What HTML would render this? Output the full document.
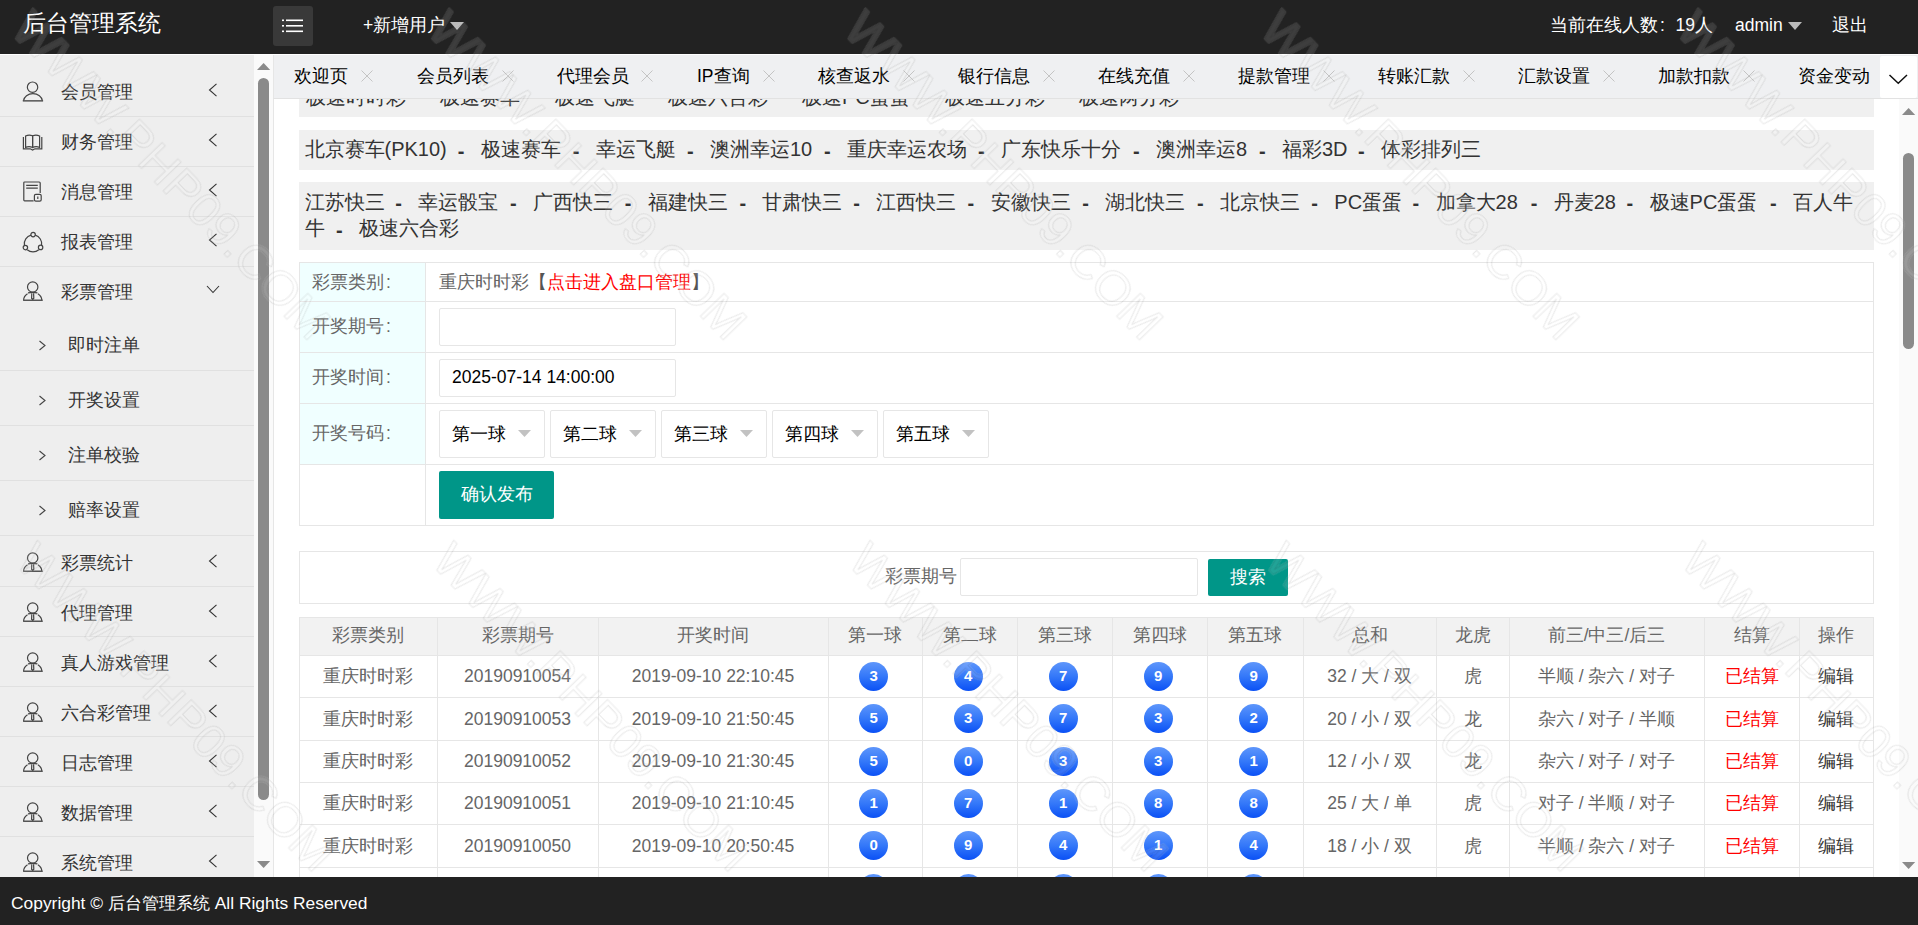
<!DOCTYPE html><html><head><meta charset="utf-8"><style>
*{margin:0;padding:0;box-sizing:border-box}
html,body{width:1918px;height:925px;overflow:hidden;background:#fff;font-family:"Liberation Sans",sans-serif;color:#333}
.a{position:absolute;white-space:nowrap}
#hd{position:absolute;left:0;top:0;width:1918px;height:54px;background:#222}
.logo{left:23px;top:7px;font-size:22.5px;line-height:34px;color:#fff}
.ham{left:273px;top:6px;width:40px;height:40px;background:#393939;border-radius:3px}
.hw{color:#fff;font-size:17.5px;line-height:28px;top:11px}
.tri{display:inline-block;width:0;height:0;border-left:7px solid transparent;border-right:7px solid transparent;border-top:8px solid #bbb;vertical-align:middle}
#side{position:absolute;left:0;top:55px;width:254px;height:822px;background:#eee;overflow:hidden}
.sep{position:absolute;left:0;width:254px;height:1px;background:#e0e0e0}
.st{font-size:17.5px;line-height:26px;color:#333}
#sscroll{position:absolute;left:254px;top:55px;width:19px;height:822px;background:#fafafa}
#tabs{position:absolute;left:273px;top:55px;width:1645px;height:44px;background:#eff0f2;border-left:1px solid #e6e6e6;border-bottom:1px solid #e2e2e2}
.tb{top:9px;font-size:17.5px;line-height:24px;color:#000}
.dd{display:inline-block;width:35px;padding-left:11.5px}
.ball{position:absolute;width:29px;height:29px;border-radius:50%;background:linear-gradient(#5e96fb,#3478f9 50%,#0a50f5);color:#fff;font-weight:bold;font-size:15px;line-height:27px;text-align:center}
.cl{display:inline-block;padding-left:2px}
.cl2{display:inline-block;width:17.5px;padding-left:2px}
#ft{position:absolute;left:0;top:877px;width:1918px;height:48px;background:#222}
</style></head><body>
<div id="hd">
<div class="a logo">后台管理系统</div>
<div class="a ham"><svg width="40" height="40" style="position:absolute;left:0;top:0"><g fill="#fff"><rect x="9" y="13.5" width="2" height="1.6"/><rect x="13" y="13.5" width="17" height="1.6"/><rect x="9" y="19" width="2" height="1.6"/><rect x="13" y="19" width="17" height="1.6"/><rect x="9" y="24.5" width="2" height="1.6"/><rect x="13" y="24.5" width="17" height="1.6"/></g></svg></div>
<div class="a hw" style="left:363px">+新增用户 <span class="tri"></span></div>
<div class="a hw" style="left:1550px">当前在线人数<span class="cl2">:</span>19人</div>
<div class="a hw" style="left:1735px">admin <span class="tri"></span></div>
<div class="a hw" style="left:1832px">退出</div>
</div>
<div class="a" style="left:0;top:54px;width:1918px;height:1px;background:#fff"></div>
<div id="side"></div>
<div class="a" style="left:0;top:0;width:254px;height:877px;overflow:hidden"><svg class="a" style="left:22px;top:81px" width="22" height="22" viewBox="0 0 22 22"><g fill="none" stroke="#444" stroke-width="1.2"><circle cx="10.55" cy="6.2" r="5.2"/><path d="M1.4 20 A9.6 8.2 0 0 1 20.5 20"/></g><rect x="0.8" y="19.1" width="20.3" height="1.5" fill="#555"/></svg><div class="a st" style="left:61px;top:79px">会员管理</div><svg class="a" style="left:208px;top:83px" width="10" height="14" viewBox="0 0 10 14"><path d="M8.5 0.8 L1.5 7 L8.5 13.2" fill="none" stroke="#333" stroke-width="1.1"/></svg><svg class="a" style="left:22px;top:131px" width="22" height="22" viewBox="0 0 22 22"><g fill="none" stroke="#444" stroke-width="1.2"><path d="M3.6 5 Q7 3.4 10.6 4.8 L10.6 16.4 Q7 15 3.6 16.4 Z"/><path d="M17.6 5 Q14.2 3.4 10.6 4.8 L10.6 16.4 Q14.2 15 17.6 16.4 Z"/><path d="M1.4 6 L1.4 17.8 L8.2 17.8 L10.6 19 L13 17.8 L19.8 17.8 L19.8 6"/></g></svg><div class="a st" style="left:61px;top:129px">财务管理</div><svg class="a" style="left:208px;top:133px" width="10" height="14" viewBox="0 0 10 14"><path d="M8.5 0.8 L1.5 7 L8.5 13.2" fill="none" stroke="#333" stroke-width="1.1"/></svg><svg class="a" style="left:22px;top:181px" width="22" height="22" viewBox="0 0 22 22"><g fill="none" stroke="#444" stroke-width="1.2"><path d="M11.6 19.8 L2.6 19.8 Q1.8 19.8 1.8 19 L1.8 1.8 Q1.8 1 2.6 1 L17.2 1 Q18.2 1 18.2 2 L18.2 12"/><path d="M4.2 4.4 L15.8 4.4 M4.2 7.2 L15.8 7.2" stroke-width="1.3"/><rect x="12.4" y="13.4" width="6.8" height="6.8" rx="1.4"/><path d="M15.8 15.4 L15.8 18"/></g></svg><div class="a st" style="left:61px;top:179px">消息管理</div><svg class="a" style="left:208px;top:183px" width="10" height="14" viewBox="0 0 10 14"><path d="M8.5 0.8 L1.5 7 L8.5 13.2" fill="none" stroke="#333" stroke-width="1.1"/></svg><svg class="a" style="left:22px;top:231px" width="22" height="22" viewBox="0 0 22 22"><g fill="none" stroke="#444" stroke-width="1.2"><path d="M9 4.2 A9 9 0 0 0 2.4 14.2"/><path d="M13.2 4.2 A9 9 0 0 1 19.6 14.2"/><path d="M5.2 18.8 A9 9 0 0 0 16.8 18.8"/><circle cx="11.1" cy="3.6" r="2.2"/><circle cx="3.4" cy="16.6" r="2.2"/><circle cx="18.6" cy="16.4" r="2.2"/></g></svg><div class="a st" style="left:61px;top:229px">报表管理</div><svg class="a" style="left:208px;top:233px" width="10" height="14" viewBox="0 0 10 14"><path d="M8.5 0.8 L1.5 7 L8.5 13.2" fill="none" stroke="#333" stroke-width="1.1"/></svg><svg class="a" style="left:22px;top:281px" width="22" height="22" viewBox="0 0 22 22"><g fill="none" stroke="#444" stroke-width="1.2"><circle cx="10.7" cy="6" r="5.2"/><path d="M5.5 12.8 A9.6 8.2 0 0 0 1.6 19.4 M15.9 12.8 A9.6 8.2 0 0 1 19.8 19.4 M6 11.9 Q10.7 10.8 15.4 11.9"/><path d="M9.8 12.2 L9.6 17.2 L10.7 18.6 L11.8 17.2 L11.6 12.2"/></g><rect x="1.2" y="18.5" width="19.5" height="1.5" fill="#555"/></svg><div class="a st" style="left:61px;top:279px">彩票管理</div><svg class="a" style="left:206px;top:285px" width="14" height="9" viewBox="0 0 14 9"><path d="M1 1 L7 7.5 L13 1" fill="none" stroke="#333" stroke-width="1.1"/></svg><svg class="a" style="left:38px;top:340px" width="9" height="11" viewBox="0 0 9 11"><path d="M1.5 1 L7 5.5 L1.5 10" fill="none" stroke="#444" stroke-width="1.1"/></svg><div class="a st" style="left:68px;top:332px">即时注单</div><svg class="a" style="left:38px;top:395px" width="9" height="11" viewBox="0 0 9 11"><path d="M1.5 1 L7 5.5 L1.5 10" fill="none" stroke="#444" stroke-width="1.1"/></svg><div class="a st" style="left:68px;top:387px">开奖设置</div><svg class="a" style="left:38px;top:450px" width="9" height="11" viewBox="0 0 9 11"><path d="M1.5 1 L7 5.5 L1.5 10" fill="none" stroke="#444" stroke-width="1.1"/></svg><div class="a st" style="left:68px;top:442px">注单校验</div><svg class="a" style="left:38px;top:505px" width="9" height="11" viewBox="0 0 9 11"><path d="M1.5 1 L7 5.5 L1.5 10" fill="none" stroke="#444" stroke-width="1.1"/></svg><div class="a st" style="left:68px;top:497px">赔率设置</div><svg class="a" style="left:22px;top:552px" width="22" height="22" viewBox="0 0 22 22"><g fill="none" stroke="#444" stroke-width="1.2"><circle cx="10.7" cy="6" r="5.2"/><path d="M5.5 12.8 A9.6 8.2 0 0 0 1.6 19.4 M15.9 12.8 A9.6 8.2 0 0 1 19.8 19.4 M6 11.9 Q10.7 10.8 15.4 11.9"/><path d="M9.8 12.2 L9.6 17.2 L10.7 18.6 L11.8 17.2 L11.6 12.2"/></g><rect x="1.2" y="18.5" width="19.5" height="1.5" fill="#555"/></svg><div class="a st" style="left:61px;top:550px">彩票统计</div><svg class="a" style="left:208px;top:554px" width="10" height="14" viewBox="0 0 10 14"><path d="M8.5 0.8 L1.5 7 L8.5 13.2" fill="none" stroke="#333" stroke-width="1.1"/></svg><svg class="a" style="left:22px;top:602px" width="22" height="22" viewBox="0 0 22 22"><g fill="none" stroke="#444" stroke-width="1.2"><circle cx="10.7" cy="6" r="5.2"/><path d="M5.5 12.8 A9.6 8.2 0 0 0 1.6 19.4 M15.9 12.8 A9.6 8.2 0 0 1 19.8 19.4 M6 11.9 Q10.7 10.8 15.4 11.9"/><path d="M9.8 12.2 L9.6 17.2 L10.7 18.6 L11.8 17.2 L11.6 12.2"/></g><rect x="1.2" y="18.5" width="19.5" height="1.5" fill="#555"/></svg><div class="a st" style="left:61px;top:600px">代理管理</div><svg class="a" style="left:208px;top:604px" width="10" height="14" viewBox="0 0 10 14"><path d="M8.5 0.8 L1.5 7 L8.5 13.2" fill="none" stroke="#333" stroke-width="1.1"/></svg><svg class="a" style="left:22px;top:652px" width="22" height="22" viewBox="0 0 22 22"><g fill="none" stroke="#444" stroke-width="1.2"><circle cx="10.7" cy="6" r="5.2"/><path d="M5.5 12.8 A9.6 8.2 0 0 0 1.6 19.4 M15.9 12.8 A9.6 8.2 0 0 1 19.8 19.4 M6 11.9 Q10.7 10.8 15.4 11.9"/><path d="M9.8 12.2 L9.6 17.2 L10.7 18.6 L11.8 17.2 L11.6 12.2"/></g><rect x="1.2" y="18.5" width="19.5" height="1.5" fill="#555"/></svg><div class="a st" style="left:61px;top:650px">真人游戏管理</div><svg class="a" style="left:208px;top:654px" width="10" height="14" viewBox="0 0 10 14"><path d="M8.5 0.8 L1.5 7 L8.5 13.2" fill="none" stroke="#333" stroke-width="1.1"/></svg><svg class="a" style="left:22px;top:702px" width="22" height="22" viewBox="0 0 22 22"><g fill="none" stroke="#444" stroke-width="1.2"><circle cx="10.7" cy="6" r="5.2"/><path d="M5.5 12.8 A9.6 8.2 0 0 0 1.6 19.4 M15.9 12.8 A9.6 8.2 0 0 1 19.8 19.4 M6 11.9 Q10.7 10.8 15.4 11.9"/><path d="M9.8 12.2 L9.6 17.2 L10.7 18.6 L11.8 17.2 L11.6 12.2"/></g><rect x="1.2" y="18.5" width="19.5" height="1.5" fill="#555"/></svg><div class="a st" style="left:61px;top:700px">六合彩管理</div><svg class="a" style="left:208px;top:704px" width="10" height="14" viewBox="0 0 10 14"><path d="M8.5 0.8 L1.5 7 L8.5 13.2" fill="none" stroke="#333" stroke-width="1.1"/></svg><svg class="a" style="left:22px;top:752px" width="22" height="22" viewBox="0 0 22 22"><g fill="none" stroke="#444" stroke-width="1.2"><circle cx="10.7" cy="6" r="5.2"/><path d="M5.5 12.8 A9.6 8.2 0 0 0 1.6 19.4 M15.9 12.8 A9.6 8.2 0 0 1 19.8 19.4 M6 11.9 Q10.7 10.8 15.4 11.9"/><path d="M9.8 12.2 L9.6 17.2 L10.7 18.6 L11.8 17.2 L11.6 12.2"/></g><rect x="1.2" y="18.5" width="19.5" height="1.5" fill="#555"/></svg><div class="a st" style="left:61px;top:750px">日志管理</div><svg class="a" style="left:208px;top:754px" width="10" height="14" viewBox="0 0 10 14"><path d="M8.5 0.8 L1.5 7 L8.5 13.2" fill="none" stroke="#333" stroke-width="1.1"/></svg><svg class="a" style="left:22px;top:802px" width="22" height="22" viewBox="0 0 22 22"><g fill="none" stroke="#444" stroke-width="1.2"><circle cx="10.7" cy="6" r="5.2"/><path d="M5.5 12.8 A9.6 8.2 0 0 0 1.6 19.4 M15.9 12.8 A9.6 8.2 0 0 1 19.8 19.4 M6 11.9 Q10.7 10.8 15.4 11.9"/><path d="M9.8 12.2 L9.6 17.2 L10.7 18.6 L11.8 17.2 L11.6 12.2"/></g><rect x="1.2" y="18.5" width="19.5" height="1.5" fill="#555"/></svg><div class="a st" style="left:61px;top:800px">数据管理</div><svg class="a" style="left:208px;top:804px" width="10" height="14" viewBox="0 0 10 14"><path d="M8.5 0.8 L1.5 7 L8.5 13.2" fill="none" stroke="#333" stroke-width="1.1"/></svg><svg class="a" style="left:22px;top:852px" width="22" height="22" viewBox="0 0 22 22"><g fill="none" stroke="#444" stroke-width="1.2"><circle cx="10.7" cy="6" r="5.2"/><path d="M5.5 12.8 A9.6 8.2 0 0 0 1.6 19.4 M15.9 12.8 A9.6 8.2 0 0 1 19.8 19.4 M6 11.9 Q10.7 10.8 15.4 11.9"/><path d="M9.8 12.2 L9.6 17.2 L10.7 18.6 L11.8 17.2 L11.6 12.2"/></g><rect x="1.2" y="18.5" width="19.5" height="1.5" fill="#555"/></svg><div class="a st" style="left:61px;top:850px">系统管理</div><svg class="a" style="left:208px;top:854px" width="10" height="14" viewBox="0 0 10 14"><path d="M8.5 0.8 L1.5 7 L8.5 13.2" fill="none" stroke="#333" stroke-width="1.1"/></svg><div class="sep" style="top:116px"></div><div class="sep" style="top:166px"></div><div class="sep" style="top:216px"></div><div class="sep" style="top:266px"></div><div class="sep" style="top:370px"></div><div class="sep" style="top:425px"></div><div class="sep" style="top:480px"></div><div class="sep" style="top:535px"></div><div class="sep" style="top:586px"></div><div class="sep" style="top:636px"></div><div class="sep" style="top:686px"></div><div class="sep" style="top:736px"></div><div class="sep" style="top:786px"></div><div class="sep" style="top:836px"></div></div>
<div id="sscroll"><svg class="a" style="left:3px;top:8px" width="14" height="8"><path d="M0 7 L6.6 0 L13.2 7 Z" fill="#8a8a8a"/></svg><div class="a" style="left:4px;top:23px;width:11px;height:722px;border-radius:6px;background:#8a8a8a"></div><svg class="a" style="left:3px;top:806px" width="14" height="8"><path d="M0 0 L6.6 7 L13.2 0 Z" fill="#8a8a8a"/></svg></div>
<div class="a" style="left:273px;top:55px;width:1645px;height:822px;overflow:hidden;background:#fff"><div class="a" style="left:26px;top:22px;width:1575px;height:40px;background:#f0f0f0"></div><div class="a" style="left:26px;top:75px;width:1575px;height:40px;background:#f0f0f0"></div><div class="a" style="left:26px;top:127px;width:1575px;height:68px;background:#f0f0f0"></div><div class="a" style="left:33px;top:29px;font-size:20px;line-height:26px;color:#333">极速时时彩</div><div class="a" style="left:167px;top:29px;font-size:20px;line-height:26px;color:#333">极速赛车</div><div class="a" style="left:282px;top:29px;font-size:20px;line-height:26px;color:#333">极速飞艇</div><div class="a" style="left:395px;top:29px;font-size:20px;line-height:26px;color:#333">极速六合彩</div><div class="a" style="left:529px;top:29px;font-size:20px;line-height:26px;color:#333">极速PC蛋蛋</div><div class="a" style="left:672px;top:29px;font-size:20px;line-height:26px;color:#333">极速五分彩</div><div class="a" style="left:806px;top:29px;font-size:20px;line-height:26px;color:#333">极速两分彩</div><div class="a" style="left:31.5px;top:81px;font-size:20px;line-height:26px;color:#333">北京赛车(PK10)</div><div class="a" style="left:184.7px;top:82.5px;font-size:20px;line-height:26px;color:#333;font-weight:bold">-</div><div class="a" style="left:207.7px;top:81px;font-size:20px;line-height:26px;color:#333">极速赛车</div><div class="a" style="left:299.70000000000005px;top:82.5px;font-size:20px;line-height:26px;color:#333;font-weight:bold">-</div><div class="a" style="left:322.70000000000005px;top:81px;font-size:20px;line-height:26px;color:#333">幸运飞艇</div><div class="a" style="left:414px;top:82.5px;font-size:20px;line-height:26px;color:#333;font-weight:bold">-</div><div class="a" style="left:437px;top:81px;font-size:20px;line-height:26px;color:#333">澳洲幸运10</div><div class="a" style="left:551px;top:82.5px;font-size:20px;line-height:26px;color:#333;font-weight:bold">-</div><div class="a" style="left:574px;top:81px;font-size:20px;line-height:26px;color:#333">重庆幸运农场</div><div class="a" style="left:705px;top:82.5px;font-size:20px;line-height:26px;color:#333;font-weight:bold">-</div><div class="a" style="left:728px;top:81px;font-size:20px;line-height:26px;color:#333">广东快乐十分</div><div class="a" style="left:860px;top:82.5px;font-size:20px;line-height:26px;color:#333;font-weight:bold">-</div><div class="a" style="left:883px;top:81px;font-size:20px;line-height:26px;color:#333">澳洲幸运8</div><div class="a" style="left:986px;top:82.5px;font-size:20px;line-height:26px;color:#333;font-weight:bold">-</div><div class="a" style="left:1009px;top:81px;font-size:20px;line-height:26px;color:#333">福彩3D</div><div class="a" style="left:1085px;top:82.5px;font-size:20px;line-height:26px;color:#333;font-weight:bold">-</div><div class="a" style="left:1108px;top:81px;font-size:20px;line-height:26px;color:#333">体彩排列三</div><div class="a" style="left:31.80000000000001px;top:133.5px;font-size:20px;line-height:26px;color:#333">江苏快三</div><div class="a" style="left:122.30000000000001px;top:135.0px;font-size:20px;line-height:26px;color:#333;font-weight:bold">-</div><div class="a" style="left:145.3px;top:133.5px;font-size:20px;line-height:26px;color:#333">幸运骰宝</div><div class="a" style="left:237px;top:135.0px;font-size:20px;line-height:26px;color:#333;font-weight:bold">-</div><div class="a" style="left:260px;top:133.5px;font-size:20px;line-height:26px;color:#333">广西快三</div><div class="a" style="left:351.70000000000005px;top:135.0px;font-size:20px;line-height:26px;color:#333;font-weight:bold">-</div><div class="a" style="left:374.70000000000005px;top:133.5px;font-size:20px;line-height:26px;color:#333">福建快三</div><div class="a" style="left:466.4px;top:135.0px;font-size:20px;line-height:26px;color:#333;font-weight:bold">-</div><div class="a" style="left:489.4px;top:133.5px;font-size:20px;line-height:26px;color:#333">甘肃快三</div><div class="a" style="left:580.3px;top:135.0px;font-size:20px;line-height:26px;color:#333;font-weight:bold">-</div><div class="a" style="left:603.3px;top:133.5px;font-size:20px;line-height:26px;color:#333">江西快三</div><div class="a" style="left:694.6px;top:135.0px;font-size:20px;line-height:26px;color:#333;font-weight:bold">-</div><div class="a" style="left:717.6px;top:133.5px;font-size:20px;line-height:26px;color:#333">安徽快三</div><div class="a" style="left:809.3px;top:135.0px;font-size:20px;line-height:26px;color:#333;font-weight:bold">-</div><div class="a" style="left:832.3px;top:133.5px;font-size:20px;line-height:26px;color:#333">湖北快三</div><div class="a" style="left:924px;top:135.0px;font-size:20px;line-height:26px;color:#333;font-weight:bold">-</div><div class="a" style="left:947px;top:133.5px;font-size:20px;line-height:26px;color:#333">北京快三</div><div class="a" style="left:1038.3px;top:135.0px;font-size:20px;line-height:26px;color:#333;font-weight:bold">-</div><div class="a" style="left:1061.3px;top:133.5px;font-size:20px;line-height:26px;color:#333">PC蛋蛋</div><div class="a" style="left:1139.6px;top:135.0px;font-size:20px;line-height:26px;color:#333;font-weight:bold">-</div><div class="a" style="left:1162.6px;top:133.5px;font-size:20px;line-height:26px;color:#333">加拿大28</div><div class="a" style="left:1257.7px;top:135.0px;font-size:20px;line-height:26px;color:#333;font-weight:bold">-</div><div class="a" style="left:1280.7px;top:133.5px;font-size:20px;line-height:26px;color:#333">丹麦28</div><div class="a" style="left:1353.6px;top:135.0px;font-size:20px;line-height:26px;color:#333;font-weight:bold">-</div><div class="a" style="left:1376.6px;top:133.5px;font-size:20px;line-height:26px;color:#333">极速PC蛋蛋</div><div class="a" style="left:1497px;top:135.0px;font-size:20px;line-height:26px;color:#333;font-weight:bold">-</div><div class="a" style="left:1520px;top:133.5px;font-size:20px;line-height:26px;color:#333">百人牛</div><div class="a" style="left:31.80000000000001px;top:160px;font-size:20px;line-height:26px;color:#333">牛</div><div class="a" style="left:63px;top:161.5px;font-size:20px;line-height:26px;color:#333;font-weight:bold">-</div><div class="a" style="left:86px;top:160px;font-size:20px;line-height:26px;color:#333">极速六合彩</div><div class="a" style="left:26px;top:207px;width:1575px;height:264px;border:1px solid #e6e6e6;background:#fff"></div><div class="a" style="left:27px;top:208px;width:125px;height:201px;background:#f0ffff"></div><div class="a" style="left:152px;top:208px;width:1px;height:262px;background:#e6e6e6"></div><div class="a" style="left:27px;top:246px;width:1573px;height:1px;background:#e6e6e6"></div><div class="a" style="left:27px;top:297px;width:1573px;height:1px;background:#e6e6e6"></div><div class="a" style="left:27px;top:348px;width:1573px;height:1px;background:#e6e6e6"></div><div class="a" style="left:27px;top:409px;width:1573px;height:1px;background:#e6e6e6"></div><div class="a" style="left:39px;top:215px;font-size:17.5px;line-height:24px;color:#666">彩票类别<span class="cl">:</span></div><div class="a" style="left:39px;top:259px;font-size:17.5px;line-height:24px;color:#666">开奖期号<span class="cl">:</span></div><div class="a" style="left:39px;top:310px;font-size:17.5px;line-height:24px;color:#666">开奖时间<span class="cl">:</span></div><div class="a" style="left:39px;top:366px;font-size:17.5px;line-height:24px;color:#666">开奖号码<span class="cl">:</span></div><div class="a" style="left:166px;top:215px;font-size:17.5px;line-height:24px;color:#666">重庆时时彩<span style="color:#555">【</span><span style="color:#f00">点击进入盘口管理</span><span style="color:#555">】</span></div><div class="a" style="left:166px;top:253px;width:237px;height:38px;border:1px solid #e6e6e6;border-radius:2px;background:#fff"></div><div class="a" style="left:166px;top:304px;width:237px;height:38px;border:1px solid #e6e6e6;border-radius:2px;background:#fff"></div><div class="a" style="left:179px;top:310px;font-size:17.5px;line-height:24px;color:#000">2025-07-14 14:00:00</div><div class="a" style="left:166px;top:355px;width:106px;height:48px;border:1px solid #e6e6e6;border-radius:2px;background:#fff"></div><div class="a" style="left:179px;top:367px;font-size:17.5px;line-height:24px;color:#000">第一球</div><svg class="a" style="left:245px;top:375px" width="14" height="8"><path d="M0 0 L13 0 L6.5 7 Z" fill="#c2c2c2"/></svg><div class="a" style="left:277px;top:355px;width:106px;height:48px;border:1px solid #e6e6e6;border-radius:2px;background:#fff"></div><div class="a" style="left:290px;top:367px;font-size:17.5px;line-height:24px;color:#000">第二球</div><svg class="a" style="left:356px;top:375px" width="14" height="8"><path d="M0 0 L13 0 L6.5 7 Z" fill="#c2c2c2"/></svg><div class="a" style="left:388px;top:355px;width:106px;height:48px;border:1px solid #e6e6e6;border-radius:2px;background:#fff"></div><div class="a" style="left:401px;top:367px;font-size:17.5px;line-height:24px;color:#000">第三球</div><svg class="a" style="left:467px;top:375px" width="14" height="8"><path d="M0 0 L13 0 L6.5 7 Z" fill="#c2c2c2"/></svg><div class="a" style="left:499px;top:355px;width:106px;height:48px;border:1px solid #e6e6e6;border-radius:2px;background:#fff"></div><div class="a" style="left:512px;top:367px;font-size:17.5px;line-height:24px;color:#000">第四球</div><svg class="a" style="left:578px;top:375px" width="14" height="8"><path d="M0 0 L13 0 L6.5 7 Z" fill="#c2c2c2"/></svg><div class="a" style="left:610px;top:355px;width:106px;height:48px;border:1px solid #e6e6e6;border-radius:2px;background:#fff"></div><div class="a" style="left:623px;top:367px;font-size:17.5px;line-height:24px;color:#000">第五球</div><svg class="a" style="left:689px;top:375px" width="14" height="8"><path d="M0 0 L13 0 L6.5 7 Z" fill="#c2c2c2"/></svg><div class="a" style="left:166px;top:416px;width:115px;height:48px;background:#009688;border-radius:2px"></div><div class="a" style="left:188px;top:427px;font-size:17.5px;line-height:24px;color:#fff">确认发布</div><div class="a" style="left:26px;top:496px;width:1575px;height:53px;border:1px solid #e6e6e6"></div><div class="a" style="left:612px;top:509px;font-size:17.5px;line-height:24px;color:#666">彩票期号</div><div class="a" style="left:687px;top:503px;width:238px;height:38px;border:1px solid #e6e6e6;border-radius:2px;background:#fff"></div><div class="a" style="left:935px;top:504px;width:80px;height:37px;background:#009688;border-radius:2px"></div><div class="a" style="left:957px;top:510px;font-size:17.5px;line-height:24px;color:#fff">搜索</div><div class="a" style="left:26px;top:562px;width:1575px;height:38px;background:#f2f2f2"></div><div class="a" style="left:26px;top:562px;width:1575px;height:1px;background:#e6e6e6"></div><div class="a" style="left:26px;top:600px;width:1575px;height:1px;background:#e6e6e6"></div><div class="a" style="left:26px;top:642px;width:1575px;height:1px;background:#e6e6e6"></div><div class="a" style="left:26px;top:685px;width:1575px;height:1px;background:#e6e6e6"></div><div class="a" style="left:26px;top:727px;width:1575px;height:1px;background:#e6e6e6"></div><div class="a" style="left:26px;top:769px;width:1575px;height:1px;background:#e6e6e6"></div><div class="a" style="left:26px;top:812px;width:1575px;height:1px;background:#e6e6e6"></div><div class="a" style="left:26px;top:854px;width:1575px;height:1px;background:#e6e6e6"></div><div class="a" style="left:26px;top:562px;width:1px;height:303px;background:#e6e6e6"></div><div class="a" style="left:164px;top:562px;width:1px;height:303px;background:#e6e6e6"></div><div class="a" style="left:325px;top:562px;width:1px;height:303px;background:#e6e6e6"></div><div class="a" style="left:555px;top:562px;width:1px;height:303px;background:#e6e6e6"></div><div class="a" style="left:649px;top:562px;width:1px;height:303px;background:#e6e6e6"></div><div class="a" style="left:744px;top:562px;width:1px;height:303px;background:#e6e6e6"></div><div class="a" style="left:839px;top:562px;width:1px;height:303px;background:#e6e6e6"></div><div class="a" style="left:934px;top:562px;width:1px;height:303px;background:#e6e6e6"></div><div class="a" style="left:1030px;top:562px;width:1px;height:303px;background:#e6e6e6"></div><div class="a" style="left:1163px;top:562px;width:1px;height:303px;background:#e6e6e6"></div><div class="a" style="left:1236px;top:562px;width:1px;height:303px;background:#e6e6e6"></div><div class="a" style="left:1431px;top:562px;width:1px;height:303px;background:#e6e6e6"></div><div class="a" style="left:1526px;top:562px;width:1px;height:303px;background:#e6e6e6"></div><div class="a" style="left:1600px;top:562px;width:1px;height:303px;background:#e6e6e6"></div><div class="a" style="left:26px;top:567.5px;width:138px;font-size:17.5px;line-height:24px;color:#666;text-align:center;">彩票类别</div><div class="a" style="left:164px;top:567.5px;width:161px;font-size:17.5px;line-height:24px;color:#666;text-align:center;">彩票期号</div><div class="a" style="left:325px;top:567.5px;width:230px;font-size:17.5px;line-height:24px;color:#666;text-align:center;">开奖时间</div><div class="a" style="left:555px;top:567.5px;width:94px;font-size:17.5px;line-height:24px;color:#666;text-align:center;">第一球</div><div class="a" style="left:649px;top:567.5px;width:95px;font-size:17.5px;line-height:24px;color:#666;text-align:center;">第二球</div><div class="a" style="left:744px;top:567.5px;width:95px;font-size:17.5px;line-height:24px;color:#666;text-align:center;">第三球</div><div class="a" style="left:839px;top:567.5px;width:95px;font-size:17.5px;line-height:24px;color:#666;text-align:center;">第四球</div><div class="a" style="left:934px;top:567.5px;width:96px;font-size:17.5px;line-height:24px;color:#666;text-align:center;">第五球</div><div class="a" style="left:1030px;top:567.5px;width:133px;font-size:17.5px;line-height:24px;color:#666;text-align:center;">总和</div><div class="a" style="left:1163px;top:567.5px;width:73px;font-size:17.5px;line-height:24px;color:#666;text-align:center;">龙虎</div><div class="a" style="left:1236px;top:567.5px;width:195px;font-size:17.5px;line-height:24px;color:#666;text-align:center;">前三/中三/后三</div><div class="a" style="left:1431px;top:567.5px;width:95px;font-size:17.5px;line-height:24px;color:#666;text-align:center;">结算</div><div class="a" style="left:1526px;top:567.5px;width:74px;font-size:17.5px;line-height:24px;color:#666;text-align:center;">操作</div><div class="a" style="left:26px;top:609.0px;width:138px;font-size:17.5px;line-height:24px;color:#666;text-align:center;">重庆时时彩</div><div class="a" style="left:164px;top:609.0px;width:161px;font-size:17.5px;line-height:24px;color:#666;text-align:center;">20190910054</div><div class="a" style="left:325px;top:609.0px;width:230px;font-size:17.5px;line-height:24px;color:#666;text-align:center;">2019-09-10 22:10:45</div><div class="a ball" style="left:586.2px;top:606.8px">3</div><div class="a ball" style="left:680.7px;top:606.8px">4</div><div class="a ball" style="left:775.7px;top:606.8px">7</div><div class="a ball" style="left:870.7px;top:606.8px">9</div><div class="a ball" style="left:966.2px;top:606.8px">9</div><div class="a" style="left:1030px;top:609.0px;width:133px;font-size:17.5px;line-height:24px;color:#666;text-align:center;">32 / 大 / 双</div><div class="a" style="left:1163px;top:609.0px;width:73px;font-size:17.5px;line-height:24px;color:#666;text-align:center;">虎</div><div class="a" style="left:1236px;top:609.0px;width:195px;font-size:17.5px;line-height:24px;color:#666;text-align:center;">半顺 / 杂六 / 对子</div><div class="a" style="left:1431px;top:609.0px;width:95px;font-size:17.5px;line-height:24px;color:#666;text-align:center;color:#f00">已结算</div><div class="a" style="left:1526px;top:609.0px;width:74px;font-size:17.5px;line-height:24px;color:#666;text-align:center;color:#333">编辑</div><div class="a" style="left:26px;top:651.5px;width:138px;font-size:17.5px;line-height:24px;color:#666;text-align:center;">重庆时时彩</div><div class="a" style="left:164px;top:651.5px;width:161px;font-size:17.5px;line-height:24px;color:#666;text-align:center;">20190910053</div><div class="a" style="left:325px;top:651.5px;width:230px;font-size:17.5px;line-height:24px;color:#666;text-align:center;">2019-09-10 21:50:45</div><div class="a ball" style="left:586.2px;top:649.3px">5</div><div class="a ball" style="left:680.7px;top:649.3px">3</div><div class="a ball" style="left:775.7px;top:649.3px">7</div><div class="a ball" style="left:870.7px;top:649.3px">3</div><div class="a ball" style="left:966.2px;top:649.3px">2</div><div class="a" style="left:1030px;top:651.5px;width:133px;font-size:17.5px;line-height:24px;color:#666;text-align:center;">20 / 小 / 双</div><div class="a" style="left:1163px;top:651.5px;width:73px;font-size:17.5px;line-height:24px;color:#666;text-align:center;">龙</div><div class="a" style="left:1236px;top:651.5px;width:195px;font-size:17.5px;line-height:24px;color:#666;text-align:center;">杂六 / 对子 / 半顺</div><div class="a" style="left:1431px;top:651.5px;width:95px;font-size:17.5px;line-height:24px;color:#666;text-align:center;color:#f00">已结算</div><div class="a" style="left:1526px;top:651.5px;width:74px;font-size:17.5px;line-height:24px;color:#666;text-align:center;color:#333">编辑</div><div class="a" style="left:26px;top:694.0px;width:138px;font-size:17.5px;line-height:24px;color:#666;text-align:center;">重庆时时彩</div><div class="a" style="left:164px;top:694.0px;width:161px;font-size:17.5px;line-height:24px;color:#666;text-align:center;">20190910052</div><div class="a" style="left:325px;top:694.0px;width:230px;font-size:17.5px;line-height:24px;color:#666;text-align:center;">2019-09-10 21:30:45</div><div class="a ball" style="left:586.2px;top:691.8px">5</div><div class="a ball" style="left:680.7px;top:691.8px">0</div><div class="a ball" style="left:775.7px;top:691.8px">3</div><div class="a ball" style="left:870.7px;top:691.8px">3</div><div class="a ball" style="left:966.2px;top:691.8px">1</div><div class="a" style="left:1030px;top:694.0px;width:133px;font-size:17.5px;line-height:24px;color:#666;text-align:center;">12 / 小 / 双</div><div class="a" style="left:1163px;top:694.0px;width:73px;font-size:17.5px;line-height:24px;color:#666;text-align:center;">龙</div><div class="a" style="left:1236px;top:694.0px;width:195px;font-size:17.5px;line-height:24px;color:#666;text-align:center;">杂六 / 对子 / 对子</div><div class="a" style="left:1431px;top:694.0px;width:95px;font-size:17.5px;line-height:24px;color:#666;text-align:center;color:#f00">已结算</div><div class="a" style="left:1526px;top:694.0px;width:74px;font-size:17.5px;line-height:24px;color:#666;text-align:center;color:#333">编辑</div><div class="a" style="left:26px;top:736.0px;width:138px;font-size:17.5px;line-height:24px;color:#666;text-align:center;">重庆时时彩</div><div class="a" style="left:164px;top:736.0px;width:161px;font-size:17.5px;line-height:24px;color:#666;text-align:center;">20190910051</div><div class="a" style="left:325px;top:736.0px;width:230px;font-size:17.5px;line-height:24px;color:#666;text-align:center;">2019-09-10 21:10:45</div><div class="a ball" style="left:586.2px;top:733.8px">1</div><div class="a ball" style="left:680.7px;top:733.8px">7</div><div class="a ball" style="left:775.7px;top:733.8px">1</div><div class="a ball" style="left:870.7px;top:733.8px">8</div><div class="a ball" style="left:966.2px;top:733.8px">8</div><div class="a" style="left:1030px;top:736.0px;width:133px;font-size:17.5px;line-height:24px;color:#666;text-align:center;">25 / 大 / 单</div><div class="a" style="left:1163px;top:736.0px;width:73px;font-size:17.5px;line-height:24px;color:#666;text-align:center;">虎</div><div class="a" style="left:1236px;top:736.0px;width:195px;font-size:17.5px;line-height:24px;color:#666;text-align:center;">对子 / 半顺 / 对子</div><div class="a" style="left:1431px;top:736.0px;width:95px;font-size:17.5px;line-height:24px;color:#666;text-align:center;color:#f00">已结算</div><div class="a" style="left:1526px;top:736.0px;width:74px;font-size:17.5px;line-height:24px;color:#666;text-align:center;color:#333">编辑</div><div class="a" style="left:26px;top:778.5px;width:138px;font-size:17.5px;line-height:24px;color:#666;text-align:center;">重庆时时彩</div><div class="a" style="left:164px;top:778.5px;width:161px;font-size:17.5px;line-height:24px;color:#666;text-align:center;">20190910050</div><div class="a" style="left:325px;top:778.5px;width:230px;font-size:17.5px;line-height:24px;color:#666;text-align:center;">2019-09-10 20:50:45</div><div class="a ball" style="left:586.2px;top:776.3px">0</div><div class="a ball" style="left:680.7px;top:776.3px">9</div><div class="a ball" style="left:775.7px;top:776.3px">4</div><div class="a ball" style="left:870.7px;top:776.3px">1</div><div class="a ball" style="left:966.2px;top:776.3px">4</div><div class="a" style="left:1030px;top:778.5px;width:133px;font-size:17.5px;line-height:24px;color:#666;text-align:center;">18 / 小 / 双</div><div class="a" style="left:1163px;top:778.5px;width:73px;font-size:17.5px;line-height:24px;color:#666;text-align:center;">虎</div><div class="a" style="left:1236px;top:778.5px;width:195px;font-size:17.5px;line-height:24px;color:#666;text-align:center;">半顺 / 杂六 / 对子</div><div class="a" style="left:1431px;top:778.5px;width:95px;font-size:17.5px;line-height:24px;color:#666;text-align:center;color:#f00">已结算</div><div class="a" style="left:1526px;top:778.5px;width:74px;font-size:17.5px;line-height:24px;color:#666;text-align:center;color:#333">编辑</div><div class="a" style="left:26px;top:821.0px;width:138px;font-size:17.5px;line-height:24px;color:#666;text-align:center;">重庆时时彩</div><div class="a" style="left:164px;top:821.0px;width:161px;font-size:17.5px;line-height:24px;color:#666;text-align:center;">20190910049</div><div class="a" style="left:325px;top:821.0px;width:230px;font-size:17.5px;line-height:24px;color:#666;text-align:center;">2019-09-10 20:30:45</div><div class="a ball" style="left:586.2px;top:818.8px">2</div><div class="a ball" style="left:680.7px;top:818.8px">6</div><div class="a ball" style="left:775.7px;top:818.8px">5</div><div class="a ball" style="left:870.7px;top:818.8px">0</div><div class="a ball" style="left:966.2px;top:818.8px">7</div><div class="a" style="left:1030px;top:821.0px;width:133px;font-size:17.5px;line-height:24px;color:#666;text-align:center;">20 / 小 / 双</div><div class="a" style="left:1163px;top:821.0px;width:73px;font-size:17.5px;line-height:24px;color:#666;text-align:center;">虎</div><div class="a" style="left:1236px;top:821.0px;width:195px;font-size:17.5px;line-height:24px;color:#666;text-align:center;">杂六 / 杂六 / 杂六</div><div class="a" style="left:1431px;top:821.0px;width:95px;font-size:17.5px;line-height:24px;color:#666;text-align:center;color:#f00">已结算</div><div class="a" style="left:1526px;top:821.0px;width:74px;font-size:17.5px;line-height:24px;color:#666;text-align:center;color:#333">编辑</div><div class="a" style="left:0px;top:0px;width:1px;height:822px;background:#e6e6e6"></div><div class="a" style="left:1626px;top:0px;width:19px;height:822px;background:#fafafa"></div><svg class="a" style="left:1629px;top:53px" width="14" height="8"><path d="M0 7 L6.6 0 L13.2 7 Z" fill="#8a8a8a"/></svg><div class="a" style="left:1630px;top:98px;width:11px;height:196px;background:#8a8a8a;border-radius:6px"></div><svg class="a" style="left:1629px;top:807px" width="14" height="8"><path d="M0 0 L6.6 7 L13.2 0 Z" fill="#8a8a8a"/></svg></div>
<div id="tabs"><div class="a tb" style="left:20px">欢迎页</div><div class="a tb" style="left:143px">会员列表</div><div class="a tb" style="left:283px">代理会员</div><div class="a tb" style="left:423px">IP查询</div><div class="a tb" style="left:544px">核查返水</div><div class="a tb" style="left:684px">银行信息</div><div class="a tb" style="left:824px">在线充值</div><div class="a tb" style="left:964px">提款管理</div><div class="a tb" style="left:1104px">转账汇款</div><div class="a tb" style="left:1244px">汇款设置</div><div class="a tb" style="left:1384px">加款扣款</div><div class="a tb" style="left:1524px">资金变动</div><svg class="a" style="left:87px;top:15px" width="12" height="12"><path d="M0.5 0.5 L11.5 11.5 M11.5 0.5 L0.5 11.5" stroke="#c4c4c4" stroke-width="1"/></svg><svg class="a" style="left:228px;top:15px" width="12" height="12"><path d="M0.5 0.5 L11.5 11.5 M11.5 0.5 L0.5 11.5" stroke="#c4c4c4" stroke-width="1"/></svg><svg class="a" style="left:367px;top:15px" width="12" height="12"><path d="M0.5 0.5 L11.5 11.5 M11.5 0.5 L0.5 11.5" stroke="#c4c4c4" stroke-width="1"/></svg><svg class="a" style="left:489px;top:15px" width="12" height="12"><path d="M0.5 0.5 L11.5 11.5 M11.5 0.5 L0.5 11.5" stroke="#c4c4c4" stroke-width="1"/></svg><svg class="a" style="left:629px;top:15px" width="12" height="12"><path d="M0.5 0.5 L11.5 11.5 M11.5 0.5 L0.5 11.5" stroke="#c4c4c4" stroke-width="1"/></svg><svg class="a" style="left:769px;top:15px" width="12" height="12"><path d="M0.5 0.5 L11.5 11.5 M11.5 0.5 L0.5 11.5" stroke="#c4c4c4" stroke-width="1"/></svg><svg class="a" style="left:909px;top:15px" width="12" height="12"><path d="M0.5 0.5 L11.5 11.5 M11.5 0.5 L0.5 11.5" stroke="#c4c4c4" stroke-width="1"/></svg><svg class="a" style="left:1049px;top:15px" width="12" height="12"><path d="M0.5 0.5 L11.5 11.5 M11.5 0.5 L0.5 11.5" stroke="#c4c4c4" stroke-width="1"/></svg><svg class="a" style="left:1189px;top:15px" width="12" height="12"><path d="M0.5 0.5 L11.5 11.5 M11.5 0.5 L0.5 11.5" stroke="#c4c4c4" stroke-width="1"/></svg><svg class="a" style="left:1329px;top:15px" width="12" height="12"><path d="M0.5 0.5 L11.5 11.5 M11.5 0.5 L0.5 11.5" stroke="#c4c4c4" stroke-width="1"/></svg><svg class="a" style="left:1469px;top:15px" width="12" height="12"><path d="M0.5 0.5 L11.5 11.5 M11.5 0.5 L0.5 11.5" stroke="#c4c4c4" stroke-width="1"/></svg><div class="a" style="left:1606px;top:1px;width:37px;height:42px;background:#fff;border-radius:2px"><svg class="a" style="left:8px;top:18px" width="21" height="11"><path d="M1.5 1 L10.25 9.2 L19 1" fill="none" stroke="#111" stroke-width="1.5"/></svg></div></div>
<div id="ft"><div class="a" style="left:11px;top:14px;font-size:17.4px;line-height:24px;color:#fff">Copyright © 后台管理系统 All Rights Reserved</div></div>
<svg class="a" style="left:0;top:0;pointer-events:none" width="1918" height="925"><defs><text id="wm" x="0" y="0" font-family="Liberation Sans" font-size="49">WWW.PHP09.COM</text></defs><g opacity="0.13" fill="#fff" stroke="#fff" stroke-width="2.6" stroke-linejoin="round"><use href="#wm" transform="translate(9.0 31.4) rotate(46)"/><use href="#wm" transform="translate(425.3 31.4) rotate(46)"/><use href="#wm" transform="translate(841.6 31.4) rotate(46)"/><use href="#wm" transform="translate(1257.9 31.4) rotate(46)"/><use href="#wm" transform="translate(1674.2 31.4) rotate(46)"/><use href="#wm" transform="translate(13.5 563.0) rotate(46)"/><use href="#wm" transform="translate(429.8 563.0) rotate(46)"/><use href="#wm" transform="translate(846.1 563.0) rotate(46)"/><use href="#wm" transform="translate(1262.4 563.0) rotate(46)"/><use href="#wm" transform="translate(1678.7 563.0) rotate(46)"/></g><g fill="none" stroke="rgba(0,0,0,0.085)" stroke-width="1.1"><use href="#wm" transform="translate(9.0 31.4) rotate(46)"/><use href="#wm" transform="translate(425.3 31.4) rotate(46)"/><use href="#wm" transform="translate(841.6 31.4) rotate(46)"/><use href="#wm" transform="translate(1257.9 31.4) rotate(46)"/><use href="#wm" transform="translate(1674.2 31.4) rotate(46)"/><use href="#wm" transform="translate(13.5 563.0) rotate(46)"/><use href="#wm" transform="translate(429.8 563.0) rotate(46)"/><use href="#wm" transform="translate(846.1 563.0) rotate(46)"/><use href="#wm" transform="translate(1262.4 563.0) rotate(46)"/><use href="#wm" transform="translate(1678.7 563.0) rotate(46)"/></g></svg>
</body></html>
